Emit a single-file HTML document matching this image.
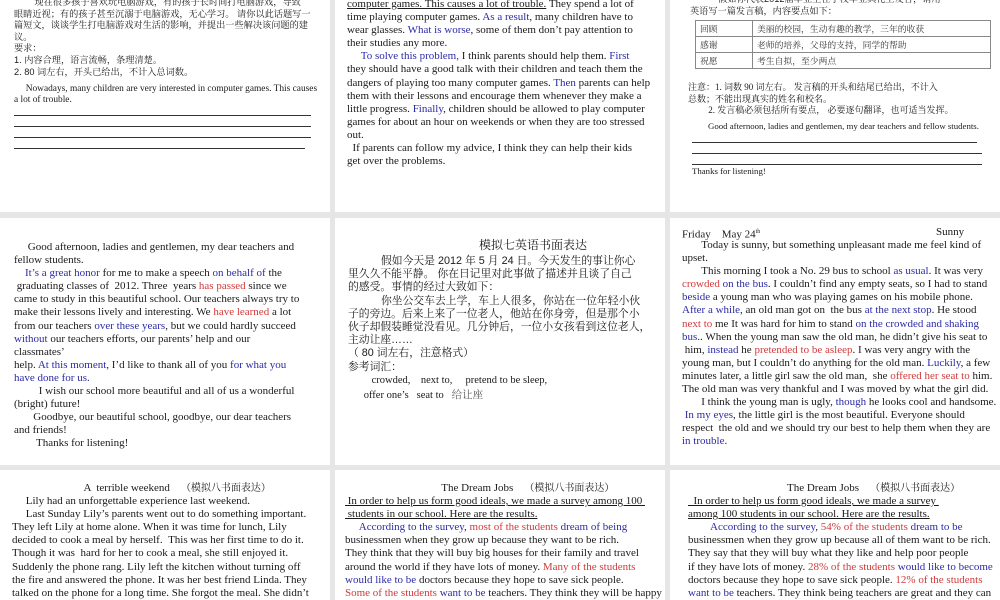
<!DOCTYPE html>
<html><head><meta charset="utf-8"><style>
body{margin:0;width:1000px;height:600px;background:#e6e6e6;position:relative;overflow:hidden;font-family:"Liberation Serif","Noto Serif CJK SC",serif;color:#1a1a1a}
.p{position:absolute;background:#fff;overflow:hidden}
.t{position:absolute;white-space:nowrap;font-size:11px;line-height:13.1px}
.c{font-family:"Liberation Sans","Noto Serif CJK SC",serif;font-size:9.2px;line-height:11.6px}
.b{color:#2b2ba6}.r{color:#d23a3a}
.u{text-decoration:underline}
.ln{position:absolute;height:0;border-top:1px solid #333}
table{position:absolute;border-collapse:collapse;font-family:"Liberation Sans","Noto Serif CJK SC",serif;font-size:8.8px;color:#333}
td{border:1px solid #888;height:15px;padding:0 4px}
</style></head><body>

<div class="p" style="left:0;top:0;width:330px;height:212px">
<div class="t c" style="left:14px;top:-3px">&nbsp;&nbsp;&nbsp;&nbsp;&nbsp;&nbsp;&nbsp;&nbsp;现在很多孩子喜欢玩电脑游戏，有的孩子长时间打电脑游戏，导致<br>眼睛近视；有的孩子甚至沉溺于电脑游戏，无心学习。 请你以此话题写一<br>篇短文，谈谈学生打电脑游戏对生活的影响，并提出一些解决该问题的建<br>议。<br>要求：<br>1. 内容合理，语言流畅，条理清楚。<br>2. 80 词左右，开头已给出，不计入总词数。</div>
<div class="t" style="left:14px;top:84px;font-size:9.4px;line-height:11px">&nbsp;&nbsp;&nbsp;&nbsp;&nbsp;Nowadays, many children are very interested in computer games. This causes<br>a lot of trouble.</div>
<div class="ln" style="left:14px;top:115px;width:297px"></div>
<div class="ln" style="left:14px;top:126px;width:297px"></div>
<div class="ln" style="left:14px;top:137px;width:297px"></div>
<div class="ln" style="left:14px;top:148px;width:291px"></div>
</div>

<div class="p" style="left:335px;top:0;width:330px;height:212px">
<div class="t" style="left:12px;top:-2px"><span class="u">computer games. This causes a lot of trouble.</span> They spend a lot of<br>time playing computer games. <span class="b">As a result</span>, many children have to<br>wear glasses. <span class="b">What is worse</span>, some of them don’t pay attention to<br>their studies any more.<br>&nbsp;&nbsp;&nbsp;&nbsp;&nbsp;<span class="b">To solve this problem,</span> I think parents should help them. <span class="b">First</span><br>they should have a good talk with their children and teach them the<br>dangers of playing too many computer games. <span class="b">Then</span> parents can help<br>them with their lessons and encourage them whenever they make a<br>little progress. <span class="b">Finally</span>, children should be allowed to play computer<br>games for about an hour on weekends or when they are too stressed<br>out.<br>&nbsp;&nbsp;If parents can follow my advice, I think they can help their kids<br>get over the problems.</div>
</div>

<div class="p" style="left:670px;top:0;width:330px;height:212px">
<div class="t c" style="left:20px;top:-6px">&nbsp;&nbsp;&nbsp;&nbsp;&nbsp;&nbsp;&nbsp;&nbsp;&nbsp;&nbsp;&nbsp;假如你代表2012届毕业生在学校毕业典礼上发言，请用<br>英语写一篇发言稿，内容要点如下：</div>
<table style="left:25px;top:20px;width:296px"><tr><td style="width:48px">回顾</td><td>美丽的校园，生动有趣的教学，三年的收获</td></tr><tr><td>感谢</td><td>老师的培养，父母的支持，同学的帮助</td></tr><tr><td>祝愿</td><td>考生自拟，至少两点</td></tr></table>
<div class="t c" style="left:18px;top:82px;font-family:'Liberation Serif','Noto Serif CJK SC',serif;font-size:9px">注意：1. 词数 90 词左右。 发言稿的开头和结尾已给出，不计入<br>总数；不能出现真实的姓名和校名。<br>&nbsp;&nbsp;&nbsp;&nbsp;&nbsp;&nbsp;&nbsp;&nbsp;&nbsp;2. 发言稿必须包括所有要点， 必要逐句翻译，也可适当发挥。</div>
<div class="t" style="left:38px;top:121px;font-size:8.8px;line-height:11px">Good afternoon, ladies and gentlemen, my dear teachers and fellow students.</div>
<div class="ln" style="left:22px;top:142px;width:285px"></div>
<div class="ln" style="left:22px;top:153px;width:290px"></div>
<div class="ln" style="left:22px;top:164px;width:290px"></div>
<div class="t" style="left:22px;top:166px;font-size:8.8px;line-height:11px">Thanks for listening!</div>
</div>

<div class="p" style="left:0;top:218px;width:330px;height:247px">
<div class="t" style="left:14px;top:23px">&nbsp;&nbsp;&nbsp;&nbsp;&nbsp;Good afternoon, ladies and gentlemen, my dear teachers and<br>fellow students.<br>&nbsp;&nbsp;&nbsp;&nbsp;<span class="b">It’s a great honor</span> for me to make a speech <span class="b">on behalf of</span> the<br>&nbsp;graduating classes of &nbsp;2012. Three &nbsp;years <span class="r">has passed</span> since we<br>came to study in this beautiful school. Our teachers always try to<br>make their lessons lively and interesting. We <span class="r">have learned</span> a lot<br>from our teachers <span class="b">over these years</span>, but we could hardly succeed<br><span class="b">without</span> our teachers efforts, our parents’ help and our<br>classmates’<br>help. <span class="b">At this moment</span>, I’d like to thank all of you <span class="b">for what you<br>have done for us.</span><br>&nbsp;&nbsp;&nbsp;&nbsp;&nbsp;&nbsp;&nbsp;&nbsp;&nbsp;I wish our school more beautiful and all of us a wonderful<br>(bright) future!<br>&nbsp;&nbsp;&nbsp;&nbsp;&nbsp;&nbsp;&nbsp;Goodbye, our beautiful school, goodbye, our dear teachers<br>and friends!<br>&nbsp;&nbsp;&nbsp;&nbsp;&nbsp;&nbsp;&nbsp;&nbsp;Thanks for listening!</div>
</div>

<div class="p" style="left:335px;top:218px;width:330px;height:247px">
<div class="t c" style="left:144px;top:20px;font-size:12px;line-height:14px">模拟七英语书面表达</div>
<div class="t c" style="left:13px;top:37px;font-size:10.8px;line-height:13.2px">&nbsp;&nbsp;&nbsp;&nbsp;&nbsp;&nbsp;&nbsp;&nbsp;&nbsp;&nbsp;&nbsp;假如今天是 2012 年 5 月 24 日。今天发生的事让你心<br>里久久不能平静。 你在日记里对此事做了描述并且谈了自己<br>的感受。事情的经过大致如下：<br>&nbsp;&nbsp;&nbsp;&nbsp;&nbsp;&nbsp;&nbsp;&nbsp;&nbsp;&nbsp;&nbsp;你坐公交车去上学，车上人很多，你站在一位年轻小伙<br>子的旁边。后来上来了一位老人，他站在你身旁，但是那个小<br>伙子却假装睡觉没看见。几分钟后，一位小女孩看到这位老人，<br>主动让座……<br>（ 80 词左右，注意格式）<br>参考词汇：</div>
<div class="t" style="left:13px;top:156px;font-size:10.5px;line-height:13.5px">&nbsp;&nbsp;&nbsp;&nbsp;&nbsp;&nbsp;&nbsp;&nbsp;&nbsp;crowded, &nbsp;&nbsp;&nbsp;next to, &nbsp;&nbsp;&nbsp;&nbsp;pretend to be sleep,<br>&nbsp;&nbsp;&nbsp;&nbsp;&nbsp;&nbsp;offer one’s &nbsp;&nbsp;seat to &nbsp;&nbsp;<span style="font-family:'Noto Serif CJK SC',serif;color:#555">给让座</span></div>
</div>

<div class="p" style="left:670px;top:218px;width:330px;height:247px">
<div class="t" style="left:12px;top:8px">Friday &nbsp;&nbsp;&nbsp;May 24<sup style="font-size:6px">th</sup></div>
<div class="t" style="left:266px;top:8px">Sunny</div>
<div class="t" style="left:12px;top:21px">&nbsp;&nbsp;&nbsp;&nbsp;&nbsp;&nbsp;&nbsp;Today is sunny, but something unpleasant made me feel kind of<br>upset.<br>&nbsp;&nbsp;&nbsp;&nbsp;&nbsp;&nbsp;&nbsp;This morning I took a No. 29 bus to school <span class="b">as usual</span>. It was very<br><span class="r">crowded</span> <span class="b">on the bus</span>. I couldn’t find any empty seats, so I had to stand<br><span class="b">beside</span> a young man who was playing games on his mobile phone.<br><span class="b">After a while</span>, an old man got on &nbsp;the bus <span class="b">at the next stop</span>. He stood<br><span class="r">next to</span> me It was hard for him to stand <span class="b">on the crowded and shaking<br>bus.</span>. When the young man saw the old man, he didn’t give his seat to<br>&nbsp;him, <span class="b">instead</span> he <span class="r">pretended to be asleep</span>. I was very angry with the<br>young man, but I couldn’t do anything for the old man. <span class="b">Luckily</span>, a few<br>minutes later, a little girl saw the old man, &nbsp;she <span class="r">offered her seat to</span> him.<br>The old man was very thankful and I was moved by what the girl did.<br>&nbsp;&nbsp;&nbsp;&nbsp;&nbsp;&nbsp;&nbsp;I think the young man is ugly, <span class="b">though</span> he looks cool and handsome.<br>&nbsp;<span class="b">In my eyes</span>, the little girl is the most beautiful. Everyone should<br>respect &nbsp;the old and we should try our best to help them when they are<br><span class="b">in trouble</span>.</div>
</div>

<div class="p" style="left:0;top:470px;width:330px;height:130px">
<div class="t" style="left:12px;top:10px">&nbsp;&nbsp;&nbsp;&nbsp;&nbsp;&nbsp;&nbsp;&nbsp;&nbsp;&nbsp;&nbsp;&nbsp;&nbsp;&nbsp;&nbsp;&nbsp;&nbsp;&nbsp;&nbsp;&nbsp;&nbsp;&nbsp;&nbsp;&nbsp;&nbsp;&nbsp;A &nbsp;terrible weekend &nbsp;&nbsp;&nbsp;<span style="font-family:'Noto Serif CJK SC',serif;font-size:10px">（模拟八书面表达）</span><br>&nbsp;&nbsp;&nbsp;&nbsp;&nbsp;Lily had an unforgettable experience last weekend.<br>&nbsp;&nbsp;&nbsp;&nbsp;&nbsp;Last Sunday Lily’s parents went out to do something important.<br>They left Lily at home alone. When it was time for lunch, Lily<br>decided to cook a meal by herself. &nbsp;This was her first time to do it.<br>Though it was &nbsp;hard for her to cook a meal, she still enjoyed it.<br>Suddenly the phone rang. Lily left the kitchen without turning off<br>the fire and answered the phone. It was her best friend Linda. They<br>talked on the phone for a long time. She forgot the meal. She didn’t</div>
</div>

<div class="p" style="left:335px;top:470px;width:330px;height:130px">
<div class="t" style="left:10px;top:10px">&nbsp;&nbsp;&nbsp;&nbsp;&nbsp;&nbsp;&nbsp;&nbsp;&nbsp;&nbsp;&nbsp;&nbsp;&nbsp;&nbsp;&nbsp;&nbsp;&nbsp;&nbsp;&nbsp;&nbsp;&nbsp;&nbsp;&nbsp;&nbsp;&nbsp;&nbsp;&nbsp;&nbsp;&nbsp;&nbsp;&nbsp;&nbsp;&nbsp;&nbsp;&nbsp;The Dream Jobs &nbsp;&nbsp;&nbsp;<span style="font-family:'Noto Serif CJK SC',serif;font-size:10px">（模拟八书面表达）</span><br><span class="u">&nbsp;In order to help us form good ideals, we made a survey among 100&nbsp;</span><br><span class="u">&nbsp;students in our school. Here are the results.</span><br>&nbsp;&nbsp;&nbsp;&nbsp;&nbsp;<span class="b">According to the survey</span>, <span class="r">most of the students</span> <span class="b">dream of being</span><br>businessmen when they grow up because they want to be rich.<br>They think that they will buy big houses for their family and travel<br>around the world if they have lots of money. <span class="r">Many of the students</span><br><span class="b">would like to be</span> doctors because they hope to save sick people.<br><span class="r">Some of the students</span> <span class="b">want to be</span> teachers. They think they will be happy</div>
</div>

<div class="p" style="left:670px;top:470px;width:330px;height:130px">
<div class="t" style="left:18px;top:10px">&nbsp;&nbsp;&nbsp;&nbsp;&nbsp;&nbsp;&nbsp;&nbsp;&nbsp;&nbsp;&nbsp;&nbsp;&nbsp;&nbsp;&nbsp;&nbsp;&nbsp;&nbsp;&nbsp;&nbsp;&nbsp;&nbsp;&nbsp;&nbsp;&nbsp;&nbsp;&nbsp;&nbsp;&nbsp;&nbsp;&nbsp;&nbsp;&nbsp;&nbsp;&nbsp;&nbsp;The Dream Jobs &nbsp;&nbsp;&nbsp;<span style="font-family:'Noto Serif CJK SC',serif;font-size:10px">（模拟八书面表达）</span><br><span class="u">&nbsp;&nbsp;In order to help us form good ideals, we made a survey&nbsp;</span><br><span class="u">among 100 students in our school. Here are the results.</span><br>&nbsp;&nbsp;&nbsp;&nbsp;&nbsp;&nbsp;&nbsp;&nbsp;<span class="b">According to the survey</span>, <span class="r">54% of the students</span> <span class="b">dream to be</span><br>businessmen when they grow up because all of them want to be rich.<br>They say that they will buy what they like and help poor people<br>if they have lots of money. <span class="r">28% of the students</span> <span class="b">would like to become</span><br>doctors because they hope to save sick people. <span class="r">12% of the students</span><br><span class="b">want to be</span> teachers. They think being teachers are great and they can</div>
</div>

</body></html>
